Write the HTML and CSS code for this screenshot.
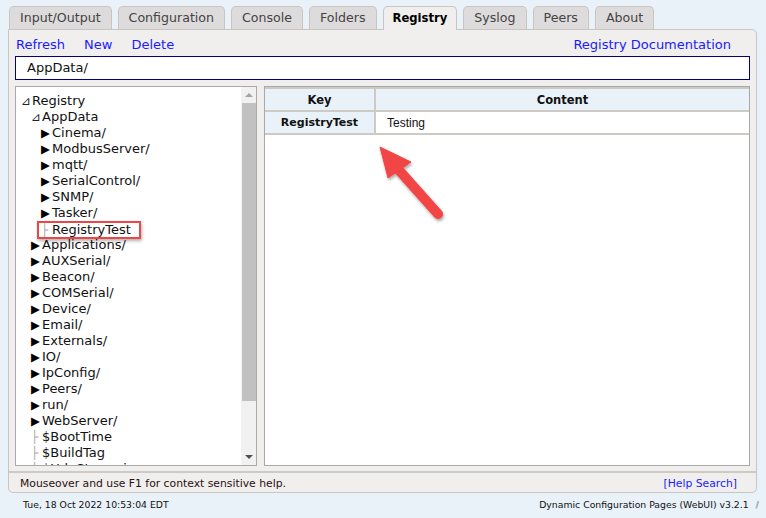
FILE: index.html
```html
<!DOCTYPE html>
<html lang="en">
<head>
    <meta charset="UTF-8">
    <title>Registry</title>
    <link rel="stylesheet" href="styles.css">
</head>
<body>
    <div class="tabs">
        <div class="tab">Input/Output</div>
        <div class="tab">Configuration</div>
        <div class="tab">Console</div>
        <div class="tab">Folders</div>
        <div class="tab active">Registry</div>
        <div class="tab">Syslog</div>
        <div class="tab">Peers</div>
        <div class="tab">About</div>
    </div>

    <div class="panel">
        <div class="toolbar">
            <a href="#">Refresh</a>
            <a href="#">New</a>
            <a href="#">Delete</a>
            <a href="#" class="doc-link">Registry Documentation</a>
        </div>
        <div class="path-box">AppData/</div>

        <div class="main">
            <div class="tree">
                <ul class="tree-list">
                    <li class="l0"><span class="tw open">&#8895;</span>Registry</li>
                    <li class="l1"><span class="tw open">&#8895;</span>AppData</li>
                    <li class="l2"><span class="tw">&#9654;</span>Cinema/</li>
                    <li class="l2"><span class="tw">&#9654;</span>ModbusServer/</li>
                    <li class="l2"><span class="tw">&#9654;</span>mqtt/</li>
                    <li class="l2"><span class="tw">&#9654;</span>SerialControl/</li>
                    <li class="l2"><span class="tw">&#9654;</span>SNMP/</li>
                    <li class="l2"><span class="tw">&#9654;</span>Tasker/</li>
                    <li class="l2"><span class="hl"><span class="tw leaf">&#9500;</span>RegistryTest</span></li>
                    <li class="l1"><span class="tw">&#9654;</span>Applications/</li>
                    <li class="l1"><span class="tw">&#9654;</span>AUXSerial/</li>
                    <li class="l1"><span class="tw">&#9654;</span>Beacon/</li>
                    <li class="l1"><span class="tw">&#9654;</span>COMSerial/</li>
                    <li class="l1"><span class="tw">&#9654;</span>Device/</li>
                    <li class="l1"><span class="tw">&#9654;</span>Email/</li>
                    <li class="l1"><span class="tw">&#9654;</span>Externals/</li>
                    <li class="l1"><span class="tw">&#9654;</span>IO/</li>
                    <li class="l1"><span class="tw">&#9654;</span>IpConfig/</li>
                    <li class="l1"><span class="tw">&#9654;</span>Peers/</li>
                    <li class="l1"><span class="tw">&#9654;</span>run/</li>
                    <li class="l1"><span class="tw">&#9654;</span>WebServer/</li>
                    <li class="l1"><span class="tw leaf">&#9500;</span>$BootTime</li>
                    <li class="l1"><span class="tw leaf">&#9500;</span>$BuildTag</li>
                    <li class="l1"><span class="tw leaf">&#9500;</span>$UdpStreaming</li>
                </ul>
                <div class="scrollbar">
                    <div class="sb-btn up"></div>
                    <div class="sb-track"><div class="sb-thumb"></div></div>
                    <div class="sb-btn down"></div>
                </div>
            </div>

            <div class="content">
                <table class="reg-table">
                    <tr>
                        <th class="key-col">Key</th>
                        <th>Content</th>
                    </tr>
                    <tr>
                        <td class="key">RegistryTest</td>
                        <td class="val">Testing</td>
                    </tr>
                </table>
            </div>
        </div>

        <div class="status">
            <span>Mouseover and use F1 for context sensitive help.</span>
            <a href="#">[Help Search]</a>
        </div>
    </div>

    <div class="footer">
        <span>Tue, 18 Oct 2022 10:53:04 EDT</span>
        <span>Dynamic Configuration Pages (WebUI) v3.2.1 <span class="grip">//</span></span>
    </div>

    <!-- annotation arrow -->
    <svg class="arrow" width="90" height="95" viewBox="0 0 90 95">
        <defs>
            <filter id="sh" x="-20%" y="-20%" width="140%" height="140%">
                <feDropShadow dx="1" dy="2" stdDeviation="1.5" flood-color="#000" flood-opacity="0.35"/>
            </filter>
        </defs>
        <g filter="url(#sh)" fill="#f24444" stroke="#f24444">
            <line x1="27" y1="28" x2="68" y2="74" stroke-width="10" stroke-linecap="round"/>
            <polygon points="10,7 41,22 18,38" stroke-width="1"/>
        </g>
    </svg>
</body>
</html>
```

FILE: styles.css
```css
body {
    margin: 0;
    padding: 6px 9px 0 8px;
    background: #e9f1f9;
    font-family: "DejaVu Sans", Verdana, sans-serif;
    font-size: 13px;
    color: #111;
    position: relative;
    height: 518px;
    box-sizing: border-box;
    overflow: hidden;
}

a {
    color: #1a1aff;
    text-decoration: none;
}

.tabs {
    display: flex;
    gap: 6px;
    padding-left: 1px;
    position: relative;
    z-index: 1;
}

.tab {
    height: 22px;
    line-height: 22px;
    padding: 0 10px;
    background: #dddbdb;
    border: 1px solid #c9c5c1;
    border-bottom: none;
    border-radius: 5px 5px 0 0;
    color: #444;
    font-size: 12.6px;
}

.tab.active {
    background: #f0efed;
    color: #000;
    font-weight: bold;
    font-size: 11.6px;
    padding: 0 9px;
    height: 23px;
    margin-bottom: -1px;
}

.panel {
    background: #f0efed;
    border: 1px solid #c9c5c1;
    border-radius: 0 5px 5px 5px;
    padding: 6px 6px 0 6px;
    height: 464px;
    box-sizing: border-box;
    display: flex;
    flex-direction: column;
}

.toolbar {
    display: flex;
    gap: 19px;
    padding-left: 1px;
    height: 20px;
    line-height: 18px;
}

.toolbar .doc-link {
    margin-left: auto;
    margin-right: 19px;
}

.path-box {
    height: 24px;
    line-height: 22px;
    box-sizing: border-box;
    background: #fff;
    border: 1px solid #000080;
    padding-left: 11px;
}

.main {
    display: flex;
    gap: 7px;
    margin-top: 6px;
    height: 380px;
}

.tree {
    width: 242px;
    box-sizing: border-box;
    border: 1px solid #a9a9a9;
    background: #fff;
    display: flex;
    overflow: hidden;
}

.tree-list {
    list-style: none;
    margin: 0;
    padding: 6px 0 0 0;
    flex: 1;
    overflow: hidden;
}

.tree-list li {
    height: 16px;
    line-height: 16px;
    white-space: nowrap;
}

.l0 { padding-left: 5px; }
.l1 { padding-left: 15px; }
.l2 { padding-left: 25px; }

.tw {
    display: inline-block;
    width: 11px;
    font-size: 11.5px;
    color: #000;
}

.tw.open {
    font-size: 12px;
    color: #222;
}

.tw.leaf {
    color: #aaa;
    font-size: 12px;
}

.hl {
    display: inline-block;
    height: 14px;
    line-height: 14px;
    margin-left: -4px;
    padding: 0 8px 0 2px;
    border: 2px solid #ee4646;
    box-shadow: 1px 2px 3px rgba(0, 0, 0, 0.3);
}

.scrollbar {
    width: 15px;
    background: #f1f1f1;
    display: flex;
    flex-direction: column;
}

.sb-btn {
    height: 16px;
    position: relative;
}

.sb-btn::after {
    content: "";
    position: absolute;
    left: 4px;
    border-left: 4px solid transparent;
    border-right: 4px solid transparent;
}

.sb-btn.up::after {
    top: 6px;
    border-bottom: 4px solid #a3a3a3;
}

.sb-btn.down::after {
    top: 6px;
    border-top: 4px solid #505050;
}

.sb-track {
    flex: 1;
    padding: 0 0 0 1px;
}

.sb-thumb {
    height: 298px;
    background: #c1c1c1;
}

.content {
    flex: 1;
    border: 1px solid #a9a9a9;
    background: #fff;
}

.reg-table {
    width: 100%;
    border-collapse: collapse;
    font-size: 11.5px;
}

.reg-table th,
.reg-table td {
    border: 2px solid #cdc9c4;
    height: 21px;
    padding: 0 6px;
}

.reg-table th {
    background: #e9f1f9;
    font-weight: bold;
}

.reg-table th:first-child,
.reg-table td:first-child {
    border-left: none;
}

.reg-table th:last-child,
.reg-table td:last-child {
    border-right: none;
}

.key-col {
    width: 97px;
}

.reg-table td.key {
    background: #e9f1f9;
    font-weight: bold;
    font-size: 11px;
    text-align: center;
}

.reg-table td.val {
    font-family: "Liberation Sans", Arial, sans-serif;
    font-size: 12px;
    padding-left: 11px;
}

.status {
    margin-top: 5px;
    margin-left: -6px;
    margin-right: -6px;
    border-top: 2px solid #cdc9c4;
    padding: 4px 19px 0 11px;
    display: flex;
    justify-content: space-between;
    font-size: 10.8px;
    color: #2a1010;
}

.footer {
    display: flex;
    justify-content: space-between;
    font-size: 9.3px;
    padding: 6px 0 0 15px;
    color: #111;
}

.grip {
    color: #999;
    letter-spacing: -2px;
    margin-left: 4px;
    font-size: 8px;
}

.arrow {
    position: absolute;
    left: 370px;
    top: 140px;
}
```
